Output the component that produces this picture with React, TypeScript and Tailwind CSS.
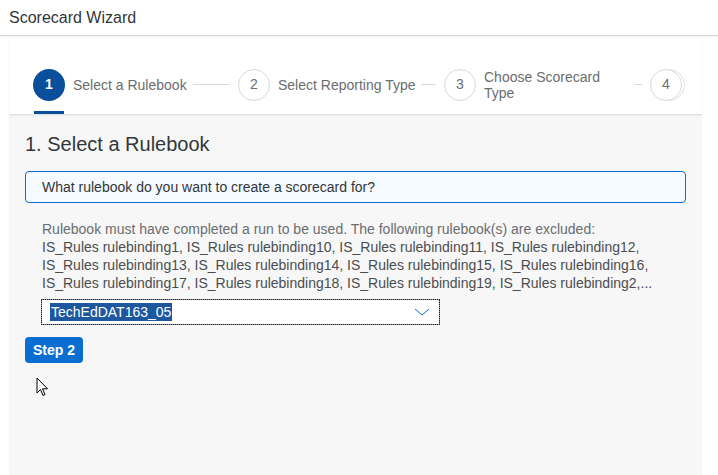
import React from 'react';

const steps = [
  { n: 1, label: 'Select a Rulebook', labelW: 'w-[112px] whitespace-nowrap', lineW: 'w-[37px]' },
  { n: 2, label: 'Select Reporting Type', labelW: 'w-[135px] whitespace-nowrap', lineW: 'w-[15px]' },
  { n: 3, label: 'Choose Scorecard Type', labelW: 'w-[142px]', lineW: 'w-[8px]' },
];

const excluded =
  'IS_Rules rulebinding1, IS_Rules rulebinding10, IS_Rules rulebinding11, IS_Rules rulebinding12, IS_Rules rulebinding13, IS_Rules rulebinding14, IS_Rules rulebinding15, IS_Rules rulebinding16, IS_Rules rulebinding17, IS_Rules rulebinding18, IS_Rules rulebinding19, IS_Rules rulebinding2,...';

const App: React.FC = () => {
  return (
    <div className="w-[718px] h-[475px] overflow-hidden bg-white text-[#32363a] [font-family:'Liberation_Sans',Arial,sans-serif]">
      {/* Header */}
      <div className="h-[36px] flex items-center pl-[9px] border-b border-[#d9d9d9] shadow-[0_1px_2px_rgba(0,0,0,0.06)] text-[16px]">
        Scorecard Wizard
      </div>

      <div className="ml-[9px] w-[693px] flex flex-col h-[439px]">
        {/* Step navigation */}
        <div className="h-[79px] relative flex items-center pl-[24px] pt-[19px] border-b border-[#e0e0e0] shadow-[0_1px_2px_rgba(0,0,0,0.05)]">
          {steps.map((s) => (
            <React.Fragment key={s.n}>
              <div
                className={
                  s.n === 1
                    ? 'w-[32px] h-[32px] shrink-0 rounded-full bg-[#0a4f9c] text-white flex items-center justify-center text-[14px] font-bold'
                    : 'w-[32px] h-[32px] shrink-0 rounded-full border border-[#d9d9d9] bg-white text-[#6a6d70] flex items-center justify-center text-[14px]'
                }
              >
                {s.n}
              </div>
              <div className={`${s.labelW} shrink-0 ml-[8px] text-[14px] leading-[16px] text-[#6a6d70]`}>{s.label}</div>
              <div className={`${s.lineW} shrink-0 mx-[8px] h-px bg-[#d9d9d9]`} />
            </React.Fragment>
          ))}
          <div className="relative w-[35px] h-[32px] shrink-0">
            <div className="absolute left-[3px] top-0 w-[32px] h-[32px] rounded-full border border-[#e0e0e0] bg-white" />
            <div className="absolute left-0 top-0 w-[32px] h-[32px] rounded-full border border-[#d9d9d9] bg-white text-[#6a6d70] flex items-center justify-center text-[14px]">
              4
            </div>
          </div>
          <div className="absolute left-[25px] bottom-0 w-[30px] h-[3px] bg-[#0a4f9c]" />
        </div>

        {/* Content panel */}
        <div className="flex-1 bg-[#f7f7f7] px-[16px] pt-[17px]">
          <h1 className="text-[20px] leading-[24px] text-[#32363a]">1. Select a Rulebook</h1>

          <div className="mt-[15px] h-[32px] flex items-center px-[16px] rounded-[4px] border border-[#0a6ed1] bg-[#f5faff] text-[14px]">
            What rulebook do you want to create a scorecard for?
          </div>

          <div className="mt-[17px] pl-[17px] pr-[24px] text-[14px] leading-[18px]">
            <p className="text-[#6a6d70]">Rulebook must have completed a run to be used. The following rulebook(s) are excluded:</p>
            <p className="text-[#4a4d50]">{excluded}</p>
          </div>

          <div className="mt-[7px] ml-[16px] w-[399px] h-[26px] flex items-center justify-between bg-white border border-[#89919a] outline-1 outline-dotted outline-[#222] -outline-offset-1 pl-[8px] pr-[9px]">
            <span className="bg-[#1c57a0] text-white text-[14px] leading-[18px] px-px">TechEdDAT163_05</span>
            <svg width="16" height="10" viewBox="0 0 16 10" fill="none">
              <path d="M1 2 L8 8 L15 2" stroke="#0a6ed1" strokeWidth="1" />
            </svg>
          </div>

          <button
            type="button"
            className="mt-[12px] h-[26px] w-[58px] rounded-[4px] bg-[#0a6ed1] text-white text-[14px] font-bold flex items-center justify-center"
          >
            Step 2
          </button>

          <div className="mt-[14px] ml-[11px]">
            <svg width="13" height="20" viewBox="0 0 13 20">
              <path d="M1 1 L1 16 L4.5 12.5 L7 18.5 L9 17.5 L6.5 11.8 L11.5 11.8 Z" fill="#fff" stroke="#000" strokeWidth="1" strokeLinejoin="miter" />
            </svg>
          </div>
        </div>
      </div>
    </div>
  );
};

export default App;
